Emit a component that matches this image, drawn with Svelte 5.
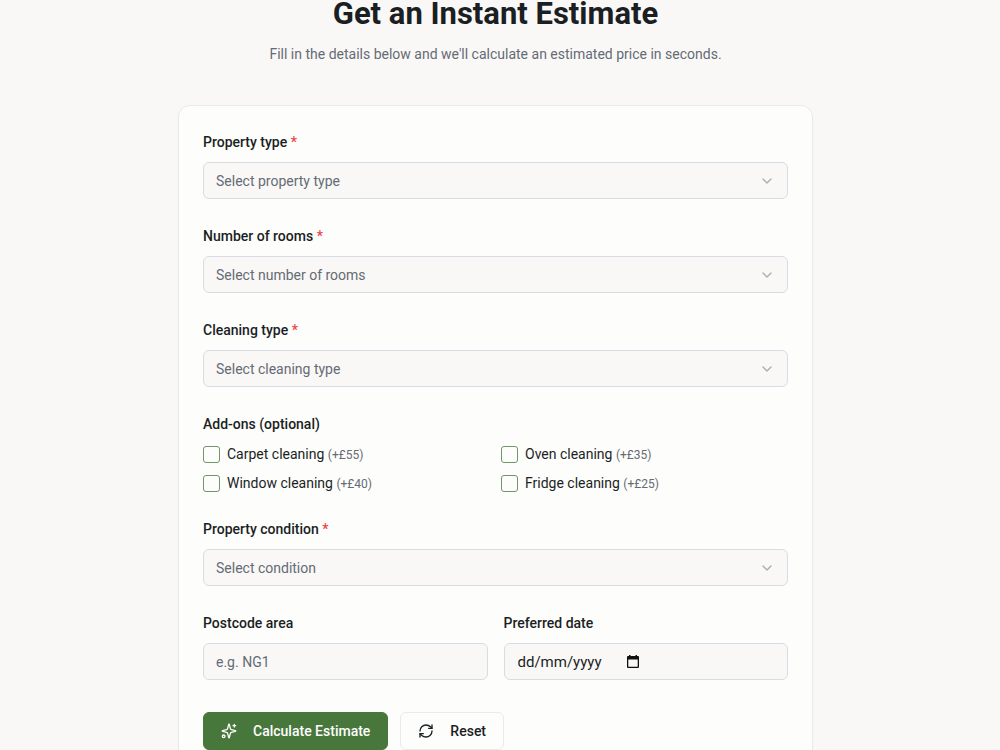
<script lang="ts">
	type Choice = { value: string; label: string };

	const propertyTypes: Choice[] = [
		{ value: 'flat', label: 'Flat' },
		{ value: 'house', label: 'House' },
		{ value: 'office', label: 'Office' }
	];

	const roomCounts: Choice[] = [
		{ value: '1', label: '1' },
		{ value: '2', label: '2' },
		{ value: '3', label: '3' },
		{ value: '4', label: '4+' }
	];

	const cleaningTypes: Choice[] = [
		{ value: 'regular', label: 'Regular' },
		{ value: 'deep', label: 'Deep clean' },
		{ value: 'tenancy', label: 'End of tenancy' }
	];

	const conditions: Choice[] = [
		{ value: 'good', label: 'Good' },
		{ value: 'average', label: 'Average' },
		{ value: 'poor', label: 'Poor' }
	];

	const addons = [
		{ id: 'carpet', label: 'Carpet cleaning', price: 55 },
		{ id: 'oven', label: 'Oven cleaning', price: 35 },
		{ id: 'window', label: 'Window cleaning', price: 40 },
		{ id: 'fridge', label: 'Fridge cleaning', price: 25 }
	];

	const empty = { property: '', rooms: '', cleaning: '', condition: '', postcode: '', date: '' };

	let form = $state({ ...empty });
	let selected = $state<string[]>([]);
	let dateInput: HTMLInputElement;

	function handleSubmit(e: SubmitEvent) {
		e.preventDefault();
	}

	function handleReset() {
		form = { ...empty };
		selected = [];
	}
</script>

{#snippet selectField(key: 'property' | 'rooms' | 'cleaning' | 'condition', label: string, placeholder: string, choices: Choice[])}
	<div class="field">
		<label for={key}>{label} <span class="required">*</span></label>
		<div class="select-wrapper">
			<select id={key} class="control" bind:value={form[key]} class:placeholder={form[key] === ''} required>
				<option value="" disabled>{placeholder}</option>
				{#each choices as choice}
					<option value={choice.value}>{choice.label}</option>
				{/each}
			</select>
			<svg class="chevron" viewBox="0 0 24 24" aria-hidden="true">
				<path d="m6 9 6 6 6-6" />
			</svg>
		</div>
	</div>
{/snippet}

<main class="estimate">
	<header class="intro">
		<h1>Get an Instant Estimate</h1>
		<p>Fill in the details below and we'll calculate an estimated price in seconds.</p>
	</header>

	<form class="card" onsubmit={handleSubmit}>
		{@render selectField('property', 'Property type', 'Select property type', propertyTypes)}
		{@render selectField('rooms', 'Number of rooms', 'Select number of rooms', roomCounts)}
		{@render selectField('cleaning', 'Cleaning type', 'Select cleaning type', cleaningTypes)}

		<fieldset class="addons">
			<legend>Add-ons (optional)</legend>
			<div class="addon-grid">
				{#each addons as addon}
					<label class="addon">
						<input type="checkbox" value={addon.id} bind:group={selected} />
						<span>{addon.label} <small>(+£{addon.price})</small></span>
					</label>
				{/each}
			</div>
		</fieldset>

		{@render selectField('condition', 'Property condition', 'Select condition', conditions)}

		<div class="row">
			<div class="field">
				<label for="postcode">Postcode area</label>
				<input id="postcode" class="control" type="text" placeholder="e.g. NG1" bind:value={form.postcode} />
			</div>
			<div class="field">
				<label for="date">Preferred date</label>
				<div class="control date-box">
					<input
						id="date"
						type="text"
						inputmode="numeric"
						placeholder="dd/mm/yyyy"
						bind:this={dateInput}
						bind:value={form.date}
					/>
					<button type="button" aria-label="Choose date" onclick={() => dateInput.focus()}>
						<svg viewBox="0 0 12 13" aria-hidden="true">
							<path fill-rule="evenodd" d="M2 0h1.500v1h5V0H10v1h1a1 1 0 0 1 1 1v10a1 1 0 0 1-1 1H1a1 1 0 0 1-1-1V2a1 1 0 0 1 1-1h1zM1.300 4.500v7.200h9.400V4.500z" />
						</svg>
					</button>
				</div>
			</div>
		</div>

		<div class="actions">
			<button type="submit" class="btn primary">
				<svg viewBox="0 0 24 24" aria-hidden="true">
					<path d="M9.9 15.5A2 2 0 0 0 8.5 14.1l-6.1-1.6a.5.5 0 0 1 0-1L8.5 9.9A2 2 0 0 0 9.9 8.5l1.6-6.1a.5.5 0 0 1 1 0l1.6 6.1a2 2 0 0 0 1.4 1.4l6.1 1.6a.5.5 0 0 1 0 1l-6.1 1.6a2 2 0 0 0-1.4 1.4l-1.6 6.1a.5.5 0 0 1-1 0z" />
					<path d="M20 2v4M22 4h-4" />
					<circle cx="4" cy="20" r="2" />
				</svg>
				Calculate Estimate
			</button>
			<button type="button" class="btn outline" onclick={handleReset}>
				<svg viewBox="0 0 24 24" aria-hidden="true">
					<path d="M3 12a9 9 0 0 1 9-9 9.75 9.75 0 0 1 6.74 2.74L21 8" />
					<path d="M21 3v5h-5" />
					<path d="M21 12a9 9 0 0 1-9 9 9.75 9.75 0 0 1-6.74-2.74L3 16" />
					<path d="M8 16H3v5" />
				</svg>
				Reset
			</button>
		</div>
	</form>
</main>

<style>
	:global(body) {
		background-color: #f9f8f7;
	}

	.estimate {
		--color-text: #1b1f24;
		--color-muted: #656b74;
		--color-border: #d8dce4;
		--color-field: #f9f8f7;
		--color-green: #48773c;

		box-sizing: border-box;
		min-height: 100vh;
		padding: 0 25px 48px 16px;
		font-family: Roboto, 'Liberation Sans', sans-serif;
		font-size: 14px;
		line-height: 22px;
		color: var(--color-text);
	}

	.intro {
		text-align: center;
		margin-bottom: 40px;
	}

	h1 {
		margin: 0 0 15px;
		font-size: 31px;
		line-height: 28px;
		font-weight: 700;
	}

	.intro p {
		margin: 0;
		color: var(--color-muted);
	}

	.card {
		box-sizing: border-box;
		max-width: 635px;
		margin: 0 auto;
		padding: 25px 24px;
		display: flex;
		flex-direction: column;
		gap: 26px;
		background-color: #fdfdfc;
		border: 1px solid #e8eaed;
		border-radius: 12px;
		box-shadow: 0 1px 2px rgba(0, 0, 0, 0.03);
	}

	.field {
		display: flex;
		flex-direction: column;
		gap: 9px;
		min-width: 0;
	}

	.field label,
	legend {
		font-weight: 500;
	}

	.required {
		color: #ef4444;
	}

	.select-wrapper {
		position: relative;
	}

	.control {
		box-sizing: border-box;
		width: 100%;
		height: 37px;
		padding: 0 12px;
		border: 1px solid var(--color-border);
		border-radius: 6px;
		background-color: var(--color-field);
		color: var(--color-text);
		font: inherit;
		appearance: none;
	}

	select {
		display: block;
		padding-right: 40px;
	}

	select.placeholder,
	.control::placeholder {
		color: var(--color-muted);
		opacity: 1;
	}

	.date-box {
		display: flex;
		align-items: center;
		gap: 12px;
	}

	.date-box input {
		box-sizing: border-box;
		width: 98px;
		padding: 0 1px;
		border: none;
		background: transparent;
		color: inherit;
		font: inherit;
		font-size: 15px;
		outline: none;
	}

	.date-box input::placeholder {
		color: var(--color-text);
		opacity: 1;
	}

	.date-box button {
		display: flex;
		padding: 0;
		border: none;
		background: none;
		cursor: pointer;
	}

	.date-box svg {
		width: 12px;
		height: 13px;
		fill: #111;
	}

	.control:focus-visible,
	.date-box:focus-within,
	.addon input:focus-visible,
	.btn:focus-visible {
		outline: 2px solid var(--color-green);
		outline-offset: 2px;
	}

	.chevron {
		position: absolute;
		top: 50%;
		right: 13px;
		width: 16px;
		height: 16px;
		transform: translateY(-50%);
		fill: none;
		stroke: #a9adb1;
		stroke-width: 2;
		stroke-linecap: round;
		stroke-linejoin: round;
		pointer-events: none;
	}

	.addons {
		margin: 0;
		padding: 0;
		border: none;
		min-width: 0;
	}

	legend {
		padding: 0;
		margin-bottom: 10px;
	}

	.addon-grid {
		display: grid;
		grid-template-columns: 1fr 1fr;
		gap: 11px;
	}

	.addon {
		display: flex;
		align-items: center;
		gap: 7px;
		line-height: 18px;
	}

	.addon input {
		appearance: none;
		box-sizing: border-box;
		flex: none;
		width: 17px;
		height: 17px;
		margin: 0;
		border: 1px solid #719667;
		border-radius: 3px;
	}

	.addon input:checked {
		background-color: var(--color-green);
	}

	.addon small {
		font-size: 12px;
		line-height: 1;
		color: var(--color-muted);
	}

	.row {
		display: grid;
		grid-template-columns: 1fr 1fr;
		gap: 16px;
	}

	.actions {
		display: flex;
		flex-wrap: wrap;
		gap: 12px;
		padding-top: 6px;
	}

	.btn {
		display: inline-flex;
		align-items: center;
		gap: 16px;
		height: 38px;
		padding: 0 17px;
		border: 1px solid #e8eaed;
		border-radius: 6px;
		background-color: transparent;
		color: var(--color-text);
		font: inherit;
		font-weight: 500;
		cursor: pointer;
	}

	.btn.primary {
		border-color: var(--color-green);
		background-color: var(--color-green);
		color: #fdfdfc;
	}

	.btn svg {
		width: 16px;
		height: 16px;
		fill: none;
		stroke: currentColor;
		stroke-width: 2;
		stroke-linecap: round;
		stroke-linejoin: round;
	}

	@media (max-width: 560px) {
		.addon-grid,
		.row {
			grid-template-columns: 1fr;
		}
	}
</style>
